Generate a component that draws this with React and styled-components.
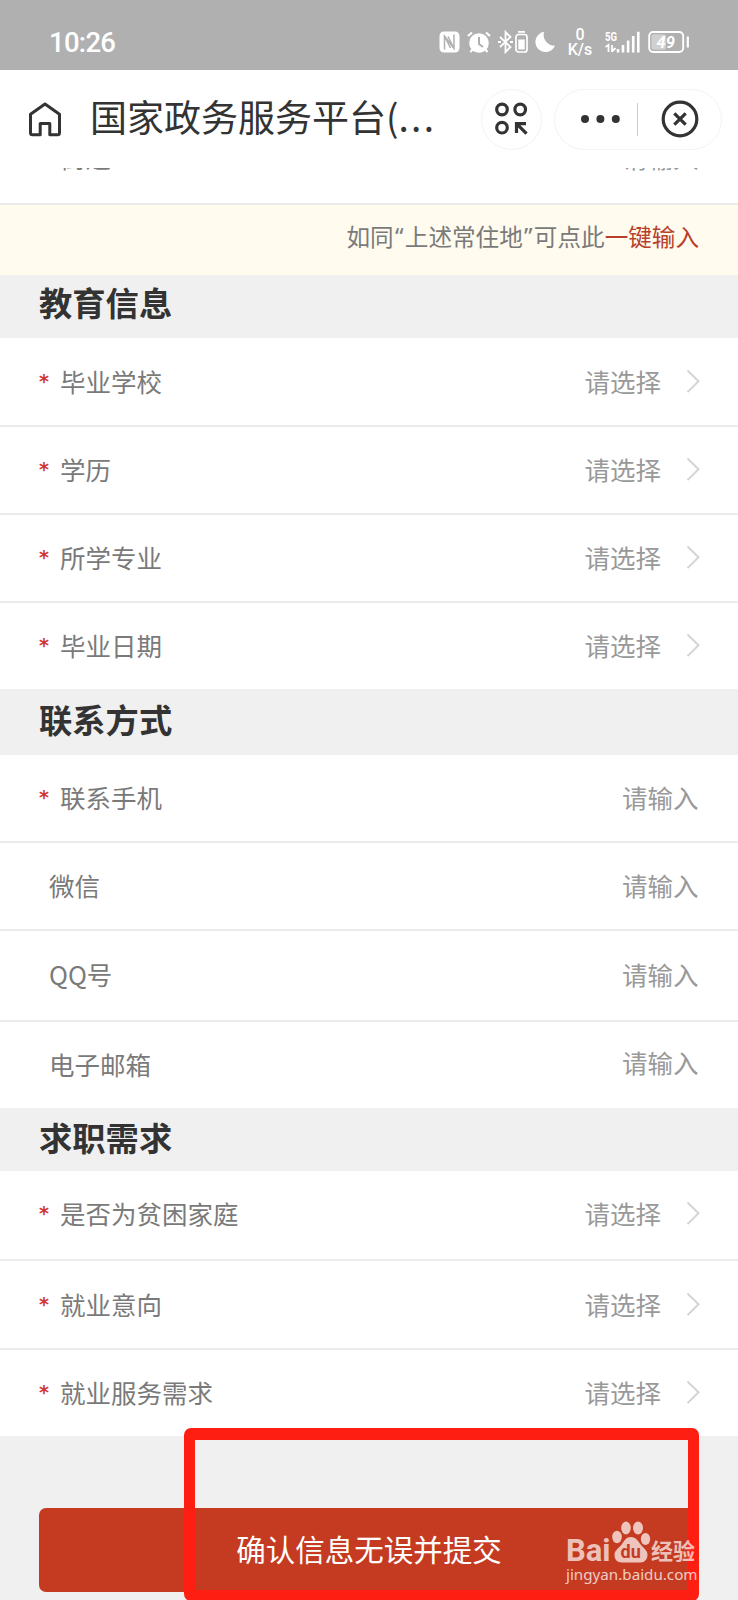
import React from "react";
import styled, { createGlobalStyle } from "styled-components";

const sections = [
  {
    title: "教育信息",
    height: 63,
    shift: -4.5,
    rows: [
      { label: "毕业学校", type: "select", required: true, height: 89 },
      { label: "学历", type: "select", required: true, height: 88 },
      { label: "所学专业", type: "select", required: true, height: 88 },
      { label: "毕业日期", type: "select", required: true, height: 86 },
    ],
  },
  {
    title: "联系方式",
    height: 66,
    shift: -3.5,
    rows: [
      { label: "联系手机", type: "input", required: true, height: 88 },
      { label: "微信", type: "input", height: 88 },
      { label: "QQ号", type: "input", height: 91, lift: 2 },
      { label: "电子邮箱", type: "input", height: 86, valueLift: 4 },
    ],
  },
  {
    title: "求职需求",
    height: 63,
    shift: -2.5,
    rows: [
      { label: "是否为贫困家庭", type: "select", required: true, height: 90, lift: 2 },
      { label: "就业意向", type: "select", required: true, height: 89 },
      { label: "就业服务需求", type: "select", required: true, height: 86 },
    ],
  },
];

const StatusIcons = () => (
  <IconRow>
    <svg width="21" height="22" viewBox="0 0 21 22">
      <rect x="0.5" y="0.5" width="20" height="21" rx="4.5" fill="#fff" />
      <path
        d="M5.5 18.5V5l9.5 12.5V3.5M5.5 5l6 12M15 17.5l-6-12"
        fill="none"
        stroke="#b0b0b0"
        strokeWidth="1.5"
      />
    </svg>
    <Gap $w={7} />
    <svg width="24" height="22" viewBox="0 0 24 22">
      <circle cx="12" cy="12" r="9.8" fill="#fff" />
      <path
        d="M1 5 5 1.5M23 5l-4-3.5M5.5 18.5 3.5 21M18.5 18.5l2 2.5"
        stroke="#fff"
        strokeWidth="2.2"
      />
      <path d="M12 6v7l4 3" fill="none" stroke="#b0b0b0" strokeWidth="2" />
    </svg>
    <Gap $w={7} />
    <svg width="15" height="22" viewBox="0 0 15 22">
      <path
        d="m2 6 10.5 10L7.5 21V1l5 5L2 16"
        fill="none"
        stroke="#fff"
        strokeWidth="1.8"
      />
      <path d="M0 11h3M12 11h3" stroke="#fff" strokeWidth="2" />
    </svg>
    <Gap $w={2} />
    <svg width="13" height="22" viewBox="0 0 13 22">
      <rect
        x="1"
        y="3.5"
        width="11"
        height="17.5"
        rx="2.5"
        fill="none"
        stroke="#fff"
        strokeWidth="1.7"
      />
      <path d="M3 .9h7" stroke="#fff" strokeWidth="1.8" />
      <rect x="3.3" y="8.5" width="6.4" height="10" fill="#fff" />
    </svg>
    <Gap $w={7} />
    <svg width="21" height="22" viewBox="0 0 21 22">
      <path
        d="M9 .8A11 11 0 0 0 20 14.8 10.2 10.2 0 1 1 9 .8Z"
        fill="#fff"
      />
    </svg>
    <Gap $w={12} />
    <Speed>
      <span>0</span>
      <span>K/s</span>
    </Speed>
    <Gap $w={13} />
    <svg width="35" height="22" viewBox="0 0 35 22">
      <text
        x="0"
        y="9.6"
        fill="#fff"
        fontFamily="Roboto, sans-serif"
        fontWeight="700"
        fontSize="13"
        textLength="12"
        lengthAdjust="spacingAndGlyphs"
      >
        5G
      </text>
      <path
        d="M.5 16 3.5 14v7M7 14v7M7 20.5 10.5 17"
        fill="none"
        stroke="#fff"
        strokeWidth="1.8"
      />
      <path
        d="M13 18v3.5M18 14v7.5M23.1 9.5v12M28.2 5v16.5M33.3 .8v20.7"
        stroke="#fff"
        strokeWidth="2.6"
      />
    </svg>
    <Gap $w={8} />
    <svg width="42" height="22" viewBox="0 0 42 22">
      <rect
        x="1.2"
        y="1"
        width="34"
        height="20"
        rx="4"
        fill="none"
        stroke="#fff"
        strokeWidth="1.9"
      />
      <rect x="3.5" y="3.3" width="14.5" height="15.4" rx="2" fill="#d0d0d0" />
      <path d="M39.8 5.5v11" stroke="#fff" strokeWidth="2.2" />
      <text
        x="8.5"
        y="16.5"
        fill="#fff"
        fontFamily="Roboto, sans-serif"
        fontStyle="italic"
        fontWeight="700"
        fontSize="16.5"
      >
        49
      </text>
    </svg>
  </IconRow>
);

const HomeIcon = () => (
  <svg width="34" height="36" viewBox="0 0 34 36">
    <path
      d="M12.2 33.7H4.5a2 2 0 0 1-2-2V13.3L17 3l14.5 10.3v18.4a2 2 0 0 1-2 2h-7.7V22.5h-9.6Z"
      fill="none"
      stroke="#333"
      strokeWidth="3"
      strokeLinejoin="round"
    />
  </svg>
);

const ScanIcon = () => (
  <svg width="34" height="34" viewBox="0 0 34 34">
    <g fill="none" stroke="#333" strokeWidth="3.2">
      <circle cx="7" cy="7.5" r="5.3" />
      <circle cx="25.2" cy="7.5" r="5.3" />
      <circle cx="7" cy="25.7" r="5.3" />
      <path d="M21.5 31V21.7H31M21.5 21.7l10 10" />
    </g>
  </svg>
);

const Chevron = () => (
  <svg width="14" height="26" viewBox="0 0 14 26">
    <path d="M1.5 2.5 12.5 13.3 1.5 24.1" fill="none" stroke="#d4d4d4" strokeWidth="2" />
  </svg>
);

const Watermark = () => (
  <WatermarkBox>
    <Brand>
      <Bai>Bai</Bai>
      <svg width="40" height="43" viewBox="0 0 40 43">
        <g fill="#fff" fillOpacity="0.7">
          <ellipse cx="6" cy="17" rx="4.8" ry="6.2" />
          <ellipse cx="15" cy="8" rx="4.8" ry="6.5" />
          <ellipse cx="27" cy="8" rx="5" ry="6.5" />
          <ellipse cx="34.5" cy="19" rx="4.7" ry="6" />
          <path d="M20 17c5 0 7 4 10 8s6.5 5 6.5 10c0 4-3 7.5-7 7.5H11c-5 0-7.5-3-7.5-7.5 0-5 4.5-7 7.5-11s4-7 9-7Z" />
        </g>
        <text
          x="9.5"
          y="38"
          fill="#c53b21"
          fontFamily="Roboto, sans-serif"
          fontWeight="700"
          fontSize="18"
        >
          du
        </text>
      </svg>
      <Jingyan>经验</Jingyan>
    </Brand>
    <Domain>jingyan.baidu.com</Domain>
  </WatermarkBox>
);

const FormRow = ({ label, type, required, height, lift, valueLift }) => (
  <Row $height={height} $lift={lift}>
    {required && <Star>*</Star>}
    <Label $required={required}>{label}</Label>
    <Value $lift={valueLift}>{type === "select" ? "请选择" : "请输入"}</Value>
    {type === "select" && <Chevron />}
  </Row>
);

const App = () => {
  return (
    <Page>
      <GlobalStyle />
      <StatusBar>
        <Time>10:26</Time>
        <StatusIcons />
      </StatusBar>
      <NavBar>
        <HomeIcon />
        <Title>
          国家政务服务平台(<Dots>...</Dots>
        </Title>
        <RoundButton>
          <ScanIcon />
        </RoundButton>
        <Capsule>
          <svg width="34" height="10" viewBox="0 0 34 10">
            <g fill="#333">
              <circle cx="4" cy="5" r="4" />
              <circle cx="19.4" cy="5" r="4" />
              <circle cx="34.8" cy="5" r="4" />
            </g>
          </svg>
          <Divider />
          <svg width="38" height="38" viewBox="0 0 38 38">
            <g fill="none" stroke="#333" strokeWidth="3.2">
              <circle cx="19" cy="19" r="16.8" />
              <path d="m13.3 13.3 11.4 11.4M24.7 13.3 13.3 24.7" />
            </g>
          </svg>
        </Capsule>
      </NavBar>
      <Scrolled>
        <Row $height={92}>
          <Label $required>街道</Label>
          <Value>请输入</Value>
        </Row>
      </Scrolled>
      <Notice>
        如同<Quote>“</Quote>上述常住地<Quote>”</Quote>可点此<em>一键输入</em>
      </Notice>
      {sections.map((section) => (
        <section key={section.title}>
          <SectionTitle $height={section.height} $shift={section.shift}>
            {section.title}
          </SectionTitle>
          {section.rows.map((row) => (
            <FormRow key={row.label} {...row} />
          ))}
        </section>
      ))}
      <Footer>
        <SubmitButton>确认信息无误并提交</SubmitButton>
      </Footer>
      <Highlight />
      <Watermark />
    </Page>
  );
};

export default App;

const GlobalStyle = createGlobalStyle`
  * {
    box-sizing: border-box;
  }
  body {
    margin: 0;
    background: #fff;
    font-family: "Noto Sans CJK SC", sans-serif;
  }
  svg {
    display: block;
    flex-shrink: 0;
    overflow: visible;
  }
`;

const Page = styled.div`
  position: relative;
  width: 738px;
  height: 1600px;
  overflow: hidden;
  background: #f0f0f0;
`;

const StatusBar = styled.div`
  display: flex;
  justify-content: space-between;
  align-items: center;
  height: 70px;
  padding: 14px 48px 0 49px;
  background: #b0b0b0;
  color: #fff;
`;

const Time = styled.div`
  font-family: Roboto, sans-serif;
  font-size: 27.5px;
  font-weight: 500;
  letter-spacing: -0.7px;
`;

const IconRow = styled.div`
  display: flex;
  align-items: center;
`;

const Gap = styled.i`
  width: ${({ $w }) => $w}px;
`;

const Speed = styled.div`
  display: flex;
  flex-direction: column;
  align-items: center;
  width: 24px;
  font-family: Roboto, sans-serif;
  font-size: 16px;
  line-height: 15px;
  font-weight: 500;
`;

const NavBar = styled.div`
  display: flex;
  align-items: center;
  height: 98px;
  padding: 0 16px 0 28px;
  background: #fff;
`;

const Title = styled.h1`
  flex: 1;
  margin: 0 0 7px 28px;
  color: #333;
  font-size: 37px;
  font-weight: 400;
  line-height: 50px;
  white-space: nowrap;
`;

const Dots = styled.span`
  letter-spacing: 2.3px;
`;

const RoundButton = styled.div`
  display: flex;
  justify-content: center;
  align-items: center;
  width: 61px;
  height: 61px;
  border: 1px solid #f3f3f3;
  border-radius: 50%;
`;

const Capsule = styled.div`
  display: flex;
  align-items: center;
  width: 168px;
  height: 61px;
  margin-left: 12px;
  padding-left: 26px;
  border: 1px solid #f3f3f3;
  border-radius: 31px;
`;

const Divider = styled.div`
  width: 1px;
  height: 33px;
  margin: 0 23px 0 22px;
  background: #ccc;
`;

/* only the bottom edge of this row shows under the nav bar */
const Scrolled = styled.div`
  display: flex;
  flex-direction: column;
  justify-content: flex-end;
  height: 37px;
  overflow: hidden;
  background: #fff;
`;

const Notice = styled.div`
  display: flex;
  justify-content: flex-end;
  align-items: center;
  height: 70px;
  padding: 0 39px 8px 0;
  background: #fffbee;
  color: #7a7a7a;
  font-size: 23.6px;

  em {
    color: #b8402a;
    font-style: normal;
  }
`;

const Quote = styled.span`
  padding: 0 1.3px;
  font-family: "Noto Sans", sans-serif;
`;

const SectionTitle = styled.h2`
  display: flex;
  align-items: center;
  height: ${({ $height }) => $height}px;
  margin: 0;
  padding: 0 39px ${({ $shift }) => $shift * -2}px;
  background: #f0f0f0;
  color: #333;
  font-size: 33.3px;
  font-weight: 700;
  line-height: 40px;
`;

const Row = styled.div`
  display: flex;
  flex-shrink: 0;
  align-items: center;
  height: ${({ $height }) => $height}px;
  padding: 0 38px ${({ $lift = 0 }) => 2 + $lift}px 39px;
  border-bottom: 2px solid #ebebeb;
  background: #fff;
  font-size: 25.5px;
  line-height: 36px;

  section &:last-child {
    border-bottom: 0;
  }
`;

const Star = styled.span`
  width: 21px;
  color: #d03535;
  font-family: "DejaVu Sans", sans-serif;
  font-size: 19px;
  font-weight: 700;
`;

const Label = styled.span`
  flex: 1;
  margin-left: ${({ $required }) => ($required ? 0 : 10)}px;
  color: #7a7a7a;

  &:first-child {
    padding-left: ${({ $required }) => ($required ? 21 : 0)}px;
  }
`;

const Value = styled.span`
  margin-bottom: ${({ $lift = 0 }) => $lift}px;
  color: #999;

  &:last-child {
    margin-right: 1.5px;
  }

  & + svg {
    margin-left: 25px;
  }
`;

const Footer = styled.div`
  padding: 72px 39px 0;
`;

const SubmitButton = styled.button`
  display: block;
  width: 100%;
  height: 84px;
  padding: 0 0 4px;
  border: 0;
  border-radius: 7px;
  background: #c53b21;
  color: #fff;
  font-family: inherit;
  font-size: 29.5px;
`;

const Highlight = styled.div`
  position: absolute;
  top: 1428px;
  left: 184px;
  width: 515px;
  height: 173px;
  border: 11px solid #ff1f12;
  border-top-width: 12px;
  border-radius: 7px;
`;

const WatermarkBox = styled.div`
  position: absolute;
  top: 1520px;
  left: 566px;
  width: 134px;
`;

const Brand = styled.div`
  display: flex;
  align-items: flex-end;
  height: 43px;
  color: rgba(255, 255, 255, 0.7);
`;

const Bai = styled.span`
  width: 45px;
  font-family: Roboto, sans-serif;
  font-size: 31px;
  font-weight: 700;
  line-height: 24px;
`;

const Jingyan = styled.span`
  padding-bottom: 2px;
  font-size: 22px;
  font-weight: 700;
  line-height: 24px;
`;

const Domain = styled.div`
  color: rgba(255, 255, 255, 0.75);
  font-family: "Noto Sans", sans-serif;
  font-size: 15.2px;
  line-height: 22px;
`;
